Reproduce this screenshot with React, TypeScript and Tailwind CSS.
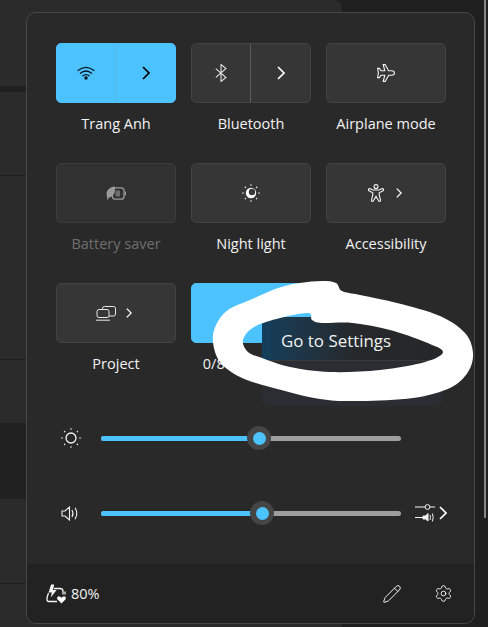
import { Pencil, Settings } from "lucide-react";
import type { ReactNode } from "react";

const Chevron = ({ small = false, color = "#ffffff" }: { small?: boolean; color?: string }) =>
    small ? (
        <svg width="6" height="10" viewBox="0 0 6 10" fill="none" stroke={color} strokeWidth="1.3">
            <path d="M0.8 0.6 L5.2 5 L0.8 9.4" />
        </svg>
    ) : (
        <svg width="8" height="14" viewBox="0 0 8 14" fill="none" stroke={color} strokeWidth="1.7">
            <path d="M1 1 L7 7 L1 13" />
        </svg>
    );

const WifiIcon = () => (
    <svg width="18" height="14" viewBox="0 0 18 14" fill="none" stroke="#06141c" strokeWidth="1.3">
        <path d="M0.6 4.8 Q9 -2 17.4 4.8" />
        <path d="M3 7.4 Q9 2.6 15 7.4" />
        <path d="M5.5 10 Q9 7.2 12.5 10" />
        <circle cx="9" cy="12" r="1.7" fill="#06141c" stroke="none" />
    </svg>
);

const BluetoothIcon = () => (
    <svg width="12" height="18" viewBox="0 0 12 18" fill="none" stroke="#e0e0e0" strokeWidth="1.1">
        <path d="M0.8 4.6 L11 13.5 L6 17.5 V0.5 L11 4.5 L0.8 13.4" />
    </svg>
);

const PlaneIcon = () => (
    <svg width="18" height="18" viewBox="0 0 18 18" fill="none" stroke="#f4f4f4" strokeWidth="1.1">
        <path d="M17.4 9 C17.4 7.8 16.2 6.8 14.8 6.8 H11.6 L8.2 0.6 H6.2 L7.8 6.8 H4 L2.4 4.4 H0.6 L1.4 9 L0.6 13.6 H2.4 L4 11.2 H7.8 L6.2 17.4 H8.2 L11.6 11.2 H14.8 C16.2 11.2 17.4 10.2 17.4 9 Z" />
    </svg>
);

const BatterySaverIcon = () => (
    <svg width="20" height="15" viewBox="0 0 20 15" fill="none">
        <path d="M0.5 8 C0.5 4 4 1 9 0.5 C9.5 6 8 10.5 3 11.5 L1.5 14.5 Z" fill="#9a9a9a" />
        <rect x="6.5" y="1.8" width="11.5" height="11.4" rx="2.8" stroke="#9a9a9a" strokeWidth="1.3" />
        <rect x="9.5" y="4.5" width="4.5" height="6" fill="#6e6e6e" />
        <path d="M19.4 5.5 V9.5" stroke="#9a9a9a" strokeWidth="1.3" />
    </svg>
);

const NightLightIcon = () => (
    <svg width="18" height="18" viewBox="0 0 18 18" fill="none">
        <circle cx="9" cy="9" r="5.2" fill="#ffffff" />
        <circle cx="10" cy="8" r="3.2" fill="#3a3a3a" />
        <g fill="#e8e8e8">
            <circle cx="9" cy="1" r="0.8" />
            <circle cx="9" cy="17" r="0.8" />
            <circle cx="1" cy="9" r="0.8" />
            <circle cx="17" cy="9" r="0.8" />
            <circle cx="3.4" cy="3.4" r="0.8" />
            <circle cx="14.6" cy="3.4" r="0.8" />
            <circle cx="3.4" cy="14.6" r="0.8" />
            <circle cx="14.6" cy="14.6" r="0.8" />
        </g>
    </svg>
);

const AccessibilityIcon = () => (
    <svg width="16" height="18" viewBox="0 0 16 18" fill="none" stroke="#f4f4f4" strokeWidth="1.1">
        <circle cx="8" cy="2.6" r="2" />
        <path d="M1.6 4.6 L5 6 H11 L14.4 4.6 C15.4 4.4 16 6.2 15 6.8 L11.2 8.8 V11 L12.6 16.2 C12.6 17.6 11 17.6 10.6 16.8 L8 12.4 L5.4 16.8 C5 17.6 3.4 17.6 3.4 16.2 L4.8 11 V8.8 L1 6.8 C0 6.2 0.6 4.4 1.6 4.6 Z" />
    </svg>
);

const ProjectIcon = () => (
    <svg width="20" height="15" viewBox="0 0 20 15" fill="none" stroke="#e8e8e8" strokeWidth="1">
        <rect x="6.5" y="0.5" width="13" height="9.5" rx="2" />
        <rect x="1" y="3.5" width="12" height="8" rx="2" fill="#363636" />
        <path d="M0 14.2 H14" />
    </svg>
);

const SunIcon = () => (
    <svg width="20" height="20" viewBox="0 0 20 20" fill="none">
        <circle cx="10" cy="10" r="5" stroke="#f4f4f4" strokeWidth="1.3" />
        <g fill="#e8e8e8">
            <circle cx="10" cy="1" r="0.8" />
            <circle cx="10" cy="19" r="0.8" />
            <circle cx="1" cy="10" r="0.8" />
            <circle cx="19" cy="10" r="0.8" />
            <circle cx="3.6" cy="3.6" r="0.8" />
            <circle cx="16.4" cy="3.6" r="0.8" />
            <circle cx="3.6" cy="16.4" r="0.8" />
            <circle cx="16.4" cy="16.4" r="0.8" />
        </g>
    </svg>
);

const VolumeIcon = () => (
    <svg width="18" height="15" viewBox="0 0 18 15" fill="none" stroke="#f0f0f0" strokeWidth="1.1">
        <path d="M1 5 H4 L8.5 1 V14 L4 10 H1 Z" />
        <path d="M11 4 Q13 7.5 11 11" />
        <path d="M14 1.8 Q17.6 7.5 14 13.2" />
    </svg>
);

const MixerIcon = () => (
    <svg width="20" height="18" viewBox="0 0 20 18" fill="none" stroke="#f4f4f4" strokeWidth="1">
        <path d="M0 3 H10 M15 3 H20" />
        <circle cx="12.5" cy="3" r="2.4" />
        <path d="M0 13.5 H8" />
        <path d="M8 12 H10.5 L13 9.5 V17 L10.5 15 H8 Z" fill="#f4f4f4" />
        <path d="M15 11 Q16 13.5 15 16 M17.4 9.5 Q19 13.5 17.4 17.4" />
    </svg>
);

const BatteryIcon = () => (
    <svg width="20" height="20" viewBox="0 0 20 20" fill="none" stroke="#f4f4f4" strokeWidth="1.3">
        <path d="M8 4.5 H14 C16 4.5 17 5.5 17 7.5 V10.5" />
        <path d="M2.5 9 L1 13.5 V15.5 C1 17 2 17.5 3 17.5 H11" />
        <path d="M5 0.6 L2.6 8.6 H5.8 L4.8 13.6 L10.6 6 H7 L8.2 0.6 Z" fill="#f4f4f4" stroke="none" />
        <path d="M19 7.5 V10.5" />
        <path d="M15.5 19.6 L11.6 15.6 C10.4 14.2 11.6 12 13.4 12.4 C14.4 12.6 15 13 15.5 13.8 C16 13 16.6 12.6 17.6 12.4 C19.4 12 20.6 14.2 19.4 15.6 Z" fill="#ffffff" stroke="none" />
    </svg>
);

type TileProps = {
    label: string;
    active?: boolean;
    disabled?: boolean;
    children: ReactNode;
    right?: ReactNode;
    className?: string;
};

const Tile = ({ label, active, disabled, children, right, className }: TileProps) => {
    const tone = active
        ? "bg-[#4cc2ff] border-[#4cc2ff]"
        : disabled
          ? "bg-[#313131] border-[#3c3c3c]"
          : "bg-[#363636] border-[#434343]";
    return (
        <div className="flex h-[120px] w-[120px] flex-col items-center">
            <div className={`flex h-[60px] w-full overflow-hidden rounded-[5px] border ${tone}`}>
                {right ? (
                    <>
                        <div className="flex flex-1 items-center justify-center">{children}</div>
                        <div
                            className={`flex w-[60px] items-center justify-center border-l ${
                                active ? "border-[#5ab6e8]" : "border-[#5a5a5a]"
                            }`}
                        >
                            {right}
                        </div>
                    </>
                ) : (
                    <div className={`flex flex-1 items-center justify-center ${className ?? ""}`}>
                        {children}
                    </div>
                )}
            </div>
            <span
                className={`mt-[11px] text-[14.5px] leading-5 whitespace-nowrap ${
                    disabled ? "text-[#6f6f6f]" : "text-[#f2f2f2]"
                }`}
            >
                {label}
            </span>
        </div>
    );
};

const Slider = ({ thumb }: { thumb: number }) => (
    <div className="relative h-[5px] w-[300px] rounded-full bg-[#9e9e9e]">
        <div className="h-full rounded-full bg-[#4cc2ff]" style={{ width: thumb }} />
        <div
            className="absolute top-1/2 flex h-[24px] w-[24px] -translate-x-1/2 -translate-y-1/2 items-center justify-center rounded-full bg-[#454545]"
            style={{ left: thumb }}
        >
            <div className="h-[13px] w-[13px] rounded-full bg-[#4cc2ff]" />
        </div>
    </div>
);

// closed smooth curve through the points
const smooth = (pts: number[][]) => {
    const n = pts.length;
    let d = `M${pts[0][0]} ${pts[0][1]}`;
    for (let i = 0; i < n; i++) {
        const [p0, p1, p2, p3] = [pts[(i - 1 + n) % n], pts[i], pts[(i + 1) % n], pts[(i + 2) % n]];
        const c1x = p1[0] + (p2[0] - p0[0]) / 6;
        const c1y = p1[1] + (p2[1] - p0[1]) / 6;
        const c2x = p2[0] - (p3[0] - p1[0]) / 6;
        const c2y = p2[1] - (p3[1] - p1[1]) / 6;
        d += ` C${c1x} ${c1y} ${c2x} ${c2y} ${p2[0]} ${p2[1]}`;
    }
    return d + " Z";
};

const outer = [
    [342, 291], [336, 283], [322, 281], [300, 283], [278, 288], [250, 300], [228, 310], [216, 325],
    [213, 342], [220, 362], [240, 377], [270, 387], [320, 399], [360, 401], [413, 398], [450, 388],
    [468, 372], [473, 353], [465, 333], [440, 316], [397, 303], [360, 295],
];
const inner = [
    [308, 313], [312, 320], [322, 323], [353, 323], [390, 330], [425, 342], [443, 352], [425, 362],
    [380, 370], [330, 372], [290, 367], [262, 358], [248, 352], [243, 340], [254, 327], [280, 318],
];

const App = () => {
    return (
        <div className="relative flex h-[627px] w-[488px] overflow-hidden bg-[#1f1f1f] font-['Open_Sans',sans-serif] text-white">
            <div className="flex w-[342px] flex-col overflow-hidden rounded-tr-lg bg-[#2b2b2b]">
                <div className="h-[86px]" />
                <div className="h-[6px] bg-[#202020]" />
                <div className="h-[84px] border-b border-[#1e1e1e]" />
                <div className="h-[184px] border-b border-[#1e1e1e]" />
                <div className="h-[63px]" />
                <div className="h-[76px] bg-[#212121]" />
                <div className="h-[85px] border-b border-[#1e1e1e]" />
            </div>
            <div className="flex flex-1 justify-end bg-[#1f1f1f] pr-[2px]">
                <div className="h-[518px] w-[2.5px] bg-[#858585]" />
            </div>

            <div className="absolute top-[12px] left-[26px] flex h-[612px] w-[449px] flex-col overflow-hidden rounded-[10px] border border-[#474747] bg-[#292929]">
                <div className="flex-1 pt-[30px] pl-[29px]">
                    <div className="grid grid-cols-[120px_120px_120px] gap-x-[15px]">
                        <Tile label="Trang Anh" active right={<Chevron color="#000000" />}>
                            <WifiIcon />
                        </Tile>
                        <Tile label="Bluetooth" right={<Chevron />}>
                            <BluetoothIcon />
                        </Tile>
                        <Tile label="Airplane mode">
                            <PlaneIcon />
                        </Tile>
                        <Tile label="Battery saver" disabled>
                            <BatterySaverIcon />
                        </Tile>
                        <Tile label="Night light">
                            <NightLightIcon />
                        </Tile>
                        <Tile label="Accessibility" className="gap-[12px] pr-[2px]">
                            <AccessibilityIcon />
                            <Chevron small />
                        </Tile>
                        <Tile label="Project" className="gap-[10px] pr-[4px]">
                            <ProjectIcon />
                            <Chevron small />
                        </Tile>
                        <Tile label="0/8 connected" active>
                            <span />
                        </Tile>
                    </div>
                    <div className="mt-[23px] flex h-[24px] items-center gap-[20px] pl-[5px]">
                        <SunIcon />
                        <Slider thumb={158} />
                    </div>
                    <div className="mt-[51px] flex h-[24px] items-center pl-[5px]">
                        <div className="w-[40px]">
                            <VolumeIcon />
                        </div>
                        <Slider thumb={161} />
                        <div className="ml-[14px] flex items-center gap-[4px]">
                            <MixerIcon />
                            <Chevron />
                        </div>
                    </div>
                </div>
                <div className="flex h-[59px] items-center justify-between bg-[#222222] pr-[21px] pl-[19px]">
                    <div className="flex items-center gap-[5px]">
                        <BatteryIcon />
                        <span className="text-[14.5px] text-[#f2f2f2]">80%</span>
                    </div>
                    <div className="flex items-center gap-[32px]">
                        <Pencil size={20} strokeWidth={1.2} color="#f0f0f0" />
                        <Settings size={19} strokeWidth={1.2} color="#f0f0f0" />
                    </div>
                </div>
            </div>

            <div className="absolute top-[317px] left-[262px] flex h-[89px] w-[180px] flex-col overflow-hidden rounded-lg bg-[#2a2e32]">
                <div className="flex h-[44px] items-center border-b border-[#3a3a3a] bg-gradient-to-r from-[#123f5c] via-[#25292c] via-50% to-[#262728] pt-[4px] pl-[19px] text-[16.9px] text-[#f2f2f2]">
                    Go to Settings
                </div>
            </div>

            <svg className="absolute inset-0" width="488" height="627" viewBox="0 0 488 627">
                <path d={`${smooth(outer)} ${smooth(inner)}`} fill="#ffffff" fillRule="evenodd" />
            </svg>
        </div>
    );
};

export default App;
